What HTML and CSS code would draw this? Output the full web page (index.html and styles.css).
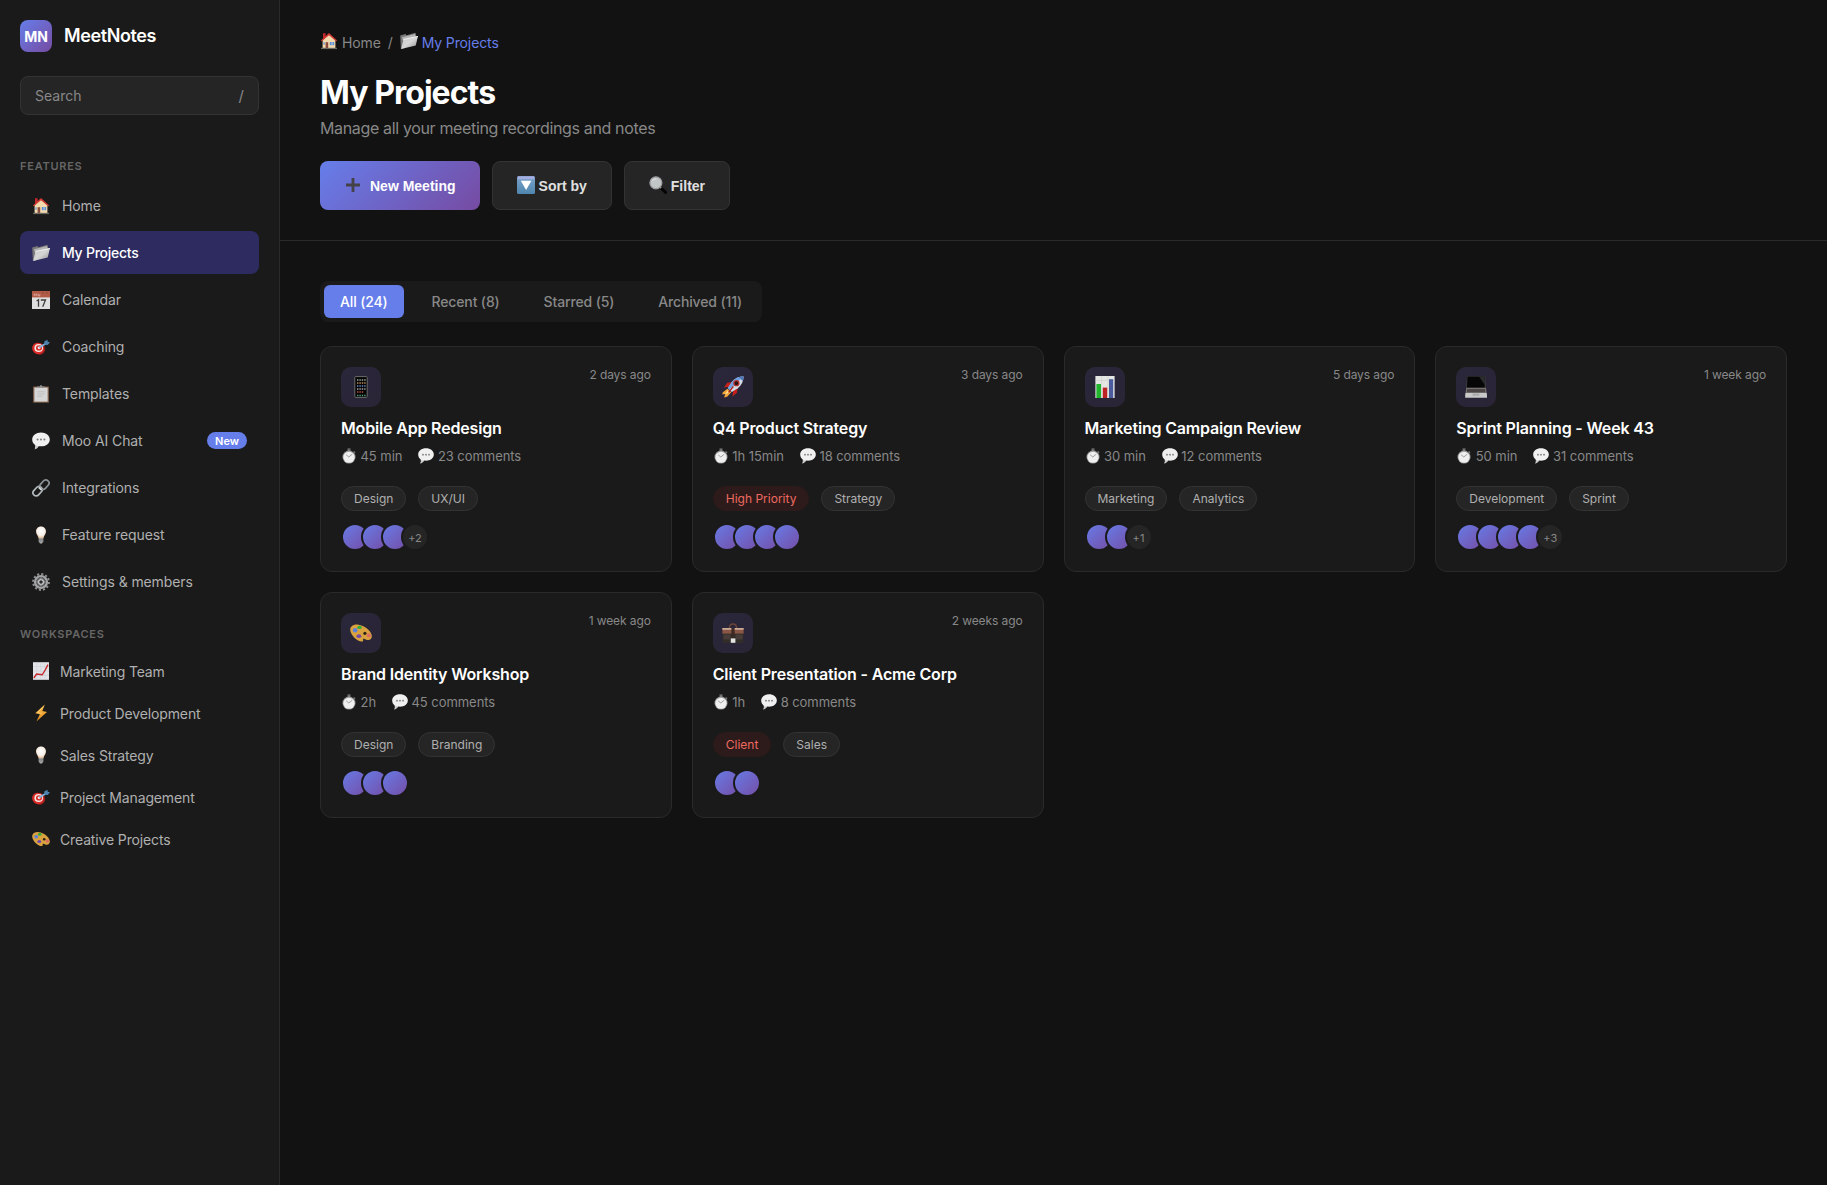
FILE: index.html
```html
<!DOCTYPE html>
<html lang="en">
<head>
  <meta charset="UTF-8" />
  <title>MeetNotes - My Projects</title>
  <link rel="stylesheet" href="styles.css">
</head>
<body>

  <!-- Icon set -->
  <svg class="sprite" xmlns="http://www.w3.org/2000/svg">
    <defs>
      <linearGradient id="silver" x1="0" y1="0" x2="1" y2="1">
        <stop offset="0" stop-color="#c9c9c9" />
        <stop offset="0.5" stop-color="#d6d6d6" />
        <stop offset="1" stop-color="#8f8f8f" />
      </linearGradient>
      <linearGradient id="gold" x1="0" y1="0" x2="0" y2="1">
        <stop offset="0" stop-color="#ffc04a" />
        <stop offset="1" stop-color="#e08a1e" />
      </linearGradient>
      <linearGradient id="blueBox" x1="0" y1="0" x2="0" y2="1">
        <stop offset="0" stop-color="#93a4d6" />
        <stop offset="0.25" stop-color="#6f9cc4" />
        <stop offset="1" stop-color="#4f86ad" />
      </linearGradient>
      <radialGradient id="bulbGlow" cx="0.5" cy="0.4" r="0.6">
        <stop offset="0" stop-color="#ffffff" />
        <stop offset="0.65" stop-color="#f6efe8" />
        <stop offset="1" stop-color="#e6b98f" />
      </radialGradient>
    </defs>

    <symbol id="i-home" viewBox="0 0 18 18">
      <path d="M3 1.2h2.6v4L3 7z" fill="#c3272b" />
      <path d="M2.6 8 9 2.4 15.4 8v8.2H2.6z" fill="#f3d9ae" />
      <path d="M.9 8.6 9 1l8.1 7.6-1 .7L9 3.2 1.9 9.3z" fill="#d43a35" />
      <path d="M5.6 10.2h2.6v6H5.6z" fill="#8a4b3a" />
      <path d="M9.8 10h4.4v3.2H9.8z" fill="#5b8fd6" />
      <path d="M11.7 10h.7v3.2h-.7z" fill="#f3e6cc" />
      <path d="M3.4 10.2h1.4v2.6H3.4z" fill="#6f9bd8" />
      <path d="M1 15.8h16v1.3H1z" fill="#6c6a63" />
    </symbol>

    <symbol id="i-folder" viewBox="0 0 18 18">
      <path d="M.2 3.4 5.4 2l1.200 1.200 8.800-2.400.8 2.600L3.600 16.400.9 17z" fill="#777" />
      <path d="M2 5.200 15 2l.6 3L3 9z" fill="#b5b5b5" />
      <path d="M3.600 7 18 4l-2.300 9.600L1.200 17z" fill="url(#silver)" />
      <path d="M3.600 7 18 4l-.2.900L3.400 7.900z" fill="#eee" />
    </symbol>

    <symbol id="i-calendar" viewBox="0 0 18 18">
      <rect width="18" height="18" fill="#dedede" />
      <rect width="18" height="6.400" fill="#b25a48" />
      <path d="M2.200 5V2.600L3.500 4.400 4.800 2.600V5M6.400 3v2h1.400V3" fill="none" stroke="#dcb5a8" stroke-width=".7" />
      <circle cx="11" cy="1.800" r=".6" fill="#5d3a33" />
      <circle cx="15" cy="1.800" r=".6" fill="#5d3a33" />
      <path d="M4.600 10 6.500 8.700v7M8.800 9h4.700l-2.800 6.700" fill="none" stroke="#3d3d3d" stroke-width="1.300" />
    </symbol>

    <symbol id="i-target" viewBox="0 0 18 18">
      <ellipse cx="7.200" cy="10.800" rx="6.100" ry="5.800" fill="#8f1e1c" transform="rotate(20 7.200 10.800)" />
      <ellipse cx="6.100" cy="10.400" rx="6" ry="5.500" fill="#dc2b28" transform="rotate(25 6.100 10.400)" />
      <ellipse cx="6.700" cy="10" rx="4.300" ry="3.900" fill="#f5e9e4" />
      <ellipse cx="7" cy="9.900" rx="3" ry="2.700" fill="#d92a27" />
      <ellipse cx="7.100" cy="9.800" rx="1.500" ry="1.400" fill="#f5e9e4" />
      <path d="m7.200 9.600 6.800-4" stroke="#7fb2dc" stroke-width="1.700" />
      <path d="m12.400 6.600-.2-3L15.400 1.800l.3 1.900 2.300.5-2.300 2.900z" fill="#4d82b0" />
    </symbol>

    <symbol id="i-clipboard" viewBox="0 0 18 18">
      <rect x="1.200" y="1.600" width="15.600" height="16" fill="#8e6a54" />
      <rect x="2.400" y="2.600" width="13.200" height="14" fill="#d6d6d6" />
      <path d="M5 2.800h8V1.400h-2.600L9.800.2H8.200l-.6 1.200H5z" fill="#909090" />
      <path d="M5.400 6.800h7.400M5.400 9h7.400M5.400 11.200h5.400" stroke="#b9b9b9" stroke-width=".8" />
    </symbol>

    <symbol id="i-chat" viewBox="0 0 18 18">
      <path d="M9 .4c5 0 8.800 3 8.800 7s-3.800 6.900-8.800 6.900c-.8 0-1.500-.1-2.200-.2-.9 1.500-2.300 2.700-4.100 3.200.6-1.200.8-2.600.5-4.200C1.400 11.800.2 9.800.2 7.400.2 3.400 4 .4 9 .4z" fill="#f0f0f0" />
      <path d="M3.200 13.100c1.600 1.100 3.700 1.300 5.800 1.200-.8 0-1.500-.1-2.200-.2-.9 1.500-2.300 2.700-4.100 3.200.6-1.200.8-2.600.5-4.200z" fill="#c9c9c9" />
      <circle cx="5.600" cy="7.500" r="1" fill="#7b7b7b" />
      <circle cx="9" cy="7.500" r="1" fill="#7b7b7b" />
      <circle cx="12.400" cy="7.500" r="1" fill="#7b7b7b" />
    </symbol>

    <symbol id="i-link" viewBox="0 0 18 18">
      <g fill="none" stroke-width="1.700">
        <rect x="-5.300" y="-3.200" width="10.600" height="6.400" rx="3.200" transform="translate(5.600 12.200) rotate(-48)" stroke="#b2b8bb" />
        <rect x="-5.300" y="-3.200" width="10.600" height="6.400" rx="3.200" transform="translate(12.400 5.700) rotate(-48)" stroke="#8b9194" />
        <path d="m6.800 8.300 2.600 2.500" stroke="#d5dadc" />
      </g>
    </symbol>

    <symbol id="i-bulb" viewBox="0 0 18 18">
      <path d="M9 .6c3 0 5 2.200 5 5 0 2.600-2 3.800-2.500 6.600h-5C6 9.400 4 8.200 4 5.600c0-2.800 2-5 5-5z" fill="url(#bulbGlow)" />
      <path d="M6.700 12h4.600v3.600L10 17.400H8l-1.300-1.800z" fill="#a9a9a9" />
      <path d="M6.700 13.300h4.600M6.700 15h4.600" stroke="#6b6b6b" stroke-width=".7" />
    </symbol>

    <symbol id="i-gear" viewBox="0 0 18 18">
      <circle cx="9" cy="9" r="7.900" fill="none" stroke="#8f9193" stroke-width="2" stroke-dasharray="2.100 2.036" />
      <circle cx="9" cy="9" r="5.900" fill="none" stroke="#a2a4a6" stroke-width="2.400" />
      <circle cx="9" cy="9" r="4.700" fill="#5f6163" />
      <circle cx="9" cy="9" r="2.400" fill="#2a2a2a" stroke="#c8cacc" stroke-width="1.300" />
      <path d="M9 4.400v2M9 11.600v2M4.400 9h2M11.600 9h2" stroke="#a2a4a6" />
    </symbol>

    <symbol id="i-trend" viewBox="0 0 18 18">
      <rect x="1" y=".2" width="16" height="17.600" fill="#e2e4e8" />
      <path d="M4.800.2v17.600M8.800.2v17.600M12.800.2v17.600M1 4.600h16M1 9h16M1 13.400h16" stroke="#cdd0d6" stroke-width=".6" />
      <path d="M1.800 16 4.600 12l5.600.8 3-4.800L16 2.600" fill="none" stroke="#c5282c" stroke-width="1.400" />
    </symbol>

    <symbol id="i-bolt" viewBox="0 0 18 18">
      <path d="M12.800.6 3.200 9.200l4.700 1L4.400 17.400 15 7.900l-4.700-1z" fill="url(#gold)" />
      <path d="M11.200 3 5.400 8.600l4.300.8" fill="none" stroke="#ffe08f" stroke-width=".7" />
    </symbol>

    <symbol id="i-palette" viewBox="0 0 18 18">
      <path d="M.2 6C.4 3.400 3.400 1.700 7 2.200c4.600.6 9.600 4.200 10.700 8.200.7 2.700-1 4.800-3.600 4.300-1.500-.3-2.300-1.300-3.200-.9-.8.400.6 1.900-.8 2.200C6.700 16.600-.2 10.600.2 6z" fill="#d9a23f" />
      <ellipse cx="4.200" cy="6.800" rx="1.900" ry="1.800" fill="#5b82d8" />
      <ellipse cx="7.800" cy="4.400" rx="1.900" ry="1.300" fill="#2fae3a" />
      <ellipse cx="7.300" cy="11.600" rx="2" ry="1.500" fill="#7448a8" />
      <ellipse cx="15.400" cy="11" rx="1.700" ry="1.700" fill="#dd6d63" />
      <circle cx="12.200" cy="9.300" r="1.300" fill="#2a2118" />
    </symbol>

    <symbol id="i-stopwatch" viewBox="0 0 18 18">
      <path d="M7.300.4h3.400v3.400H7.300z" fill="#6d6d6d" />
      <path d="m14 3.200 2.400 1.600-1.700 1.800z" fill="#7b7b7b" />
      <circle cx="9" cy="10.200" r="7.300" fill="#9b9b9b" />
      <circle cx="9" cy="10.400" r="6.300" fill="#efefef" />
      <path d="m5.800 7.700 3 2.400 3.900-3.200" fill="none" stroke="#8d8d8d" stroke-width=".9" />
    </symbol>

    <symbol id="i-plus" viewBox="0 0 18 18">
      <path d="M7.600 2h2.800v5.600H16v2.800h-5.600V16H7.600v-5.600H2V7.600h5.600z" fill="#444246" />
    </symbol>

    <symbol id="i-down" viewBox="0 0 18 18">
      <rect width="18" height="18" rx="1.500" fill="url(#blueBox)" />
      <path d="M1 .8h16v2.400H1z" fill="#a4addf" />
      <path d="M3.800 4.800h10.600L9.100 14z" fill="#fff" />
    </symbol>

    <symbol id="i-magnifier" viewBox="0 0 18 18">
      <path d="m11 11 5.600 5.400" stroke="#050505" stroke-width="3" stroke-linecap="round" />
      <path d="m10.600 10.400 1.600 1.500" stroke="#8c8c8c" stroke-width="2" />
      <circle cx="6.900" cy="6.800" r="6" fill="#c2c6c6" stroke="#9c9c9c" stroke-width="1.200" />
      <path d="M3.300 5.200c.8-1.600 2.200-2.300 3.800-2.300" fill="none" stroke="#e2e4e4" />
    </symbol>

    <symbol id="i-phone" viewBox="0 0 22 22">
      <rect x="4.800" y=".6" width="12.400" height="20.800" rx=".8" fill="#050505" stroke="#6c6c6c" stroke-width="1" />
      <g stroke-width="1.400" stroke-dasharray="1.400 1">
        <path d="M7 4h9" stroke="#9aa89a" />
        <path d="M7 7h9" stroke="#c08f58" />
        <path d="M7 10h9" stroke="#6a86c8" />
        <path d="M7 13h9" stroke="#a9a6a6" />
        <path d="M7 16h7" stroke="#b8524a" />
        <path d="M7 19.500h9" stroke="#4d9d78" />
      </g>
    </symbol>

    <symbol id="i-rocket" viewBox="0 0 22 22">
      <path d="M10 6.200 5.200 6.800 2 11.400l5-.6zM15.600 12l-.6 4.800-4.600 3.600.8-5.400z" fill="#c6201d" />
      <path d="M5.400 12.800.6 16.400l-.2 2.200 3-.6-1.400 3.600 3.200-.8 4-4.600z" fill="#f0a73a" />
      <path d="m5.600 14.400-2.800 4.400 4.200-2.600z" fill="#ffe59a" />
      <path d="M21.600.4c-4.600 0-8.800 1.800-11.600 5.400L5.800 12l4 4 6-3.800C19.600 9.200 21.600 5 21.600.4z" fill="#d3dae6" />
      <path d="M21.600.4c-4.600 0-8.800 1.800-11.600 5.400L5.800 12l1.600 1.600z" fill="#6f9fe0" />
      <path d="M21.600.4c-1.700 0-3.300.2-4.800.8l4 3.800c.6-1.500.8-3 .8-4.600z" fill="#4d78bd" />
      <circle cx="14.400" cy="7.200" r="2.500" fill="#2a1416" stroke="#b8332f" stroke-width="1.300" />
      <path d="m11.400 10.400-4.800 6" stroke="#b3211e" stroke-width="1.500" />
    </symbol>

    <symbol id="i-bars" viewBox="0 0 22 22">
      <rect x="1.400" width="19.200" height="22" fill="#e4e6e4" />
      <path d="M1.400 4.400h19.200M7.600 0v22M14 0v22" stroke="#cbd0cb" stroke-width=".6" />
      <rect x="2.400" y="8" width="4.600" height="14" fill="#21b52d" />
      <rect x="8.800" y="11.600" width="4.400" height="10.400" fill="#bd2222" />
      <rect x="15" y="3.200" width="4.200" height="18.800" fill="#4b5c9e" />
    </symbol>

    <symbol id="i-laptop" viewBox="0 0 22 22">
      <path d="M2 .2h18.200l.4 11.800H1.400z" fill="#4a4a4a" />
      <path d="M2.400.6h17.200l.2 10.800H2z" fill="#060606" />
      <path d="m14 .6h5.600l.2 8.400z" fill="#2b2d2d" />
      <path d="M1.200 12H21l1 7.400H.2z" fill="#77726f" />
      <path d="M2.200 13h17.800l.4 3.200H1.800z" fill="#4b4645" />
      <path d="M.2 19.400.6 17h21l.4 2.400v2.400H.2z" fill="#c9c9c9" />
      <path d="M7.600 17.600h6.800v2.200H7.400z" fill="#aaa" />
    </symbol>

    <symbol id="i-briefcase" viewBox="0 0 22 22">
      <path d="M7.400 6c0-3 1.200-4 3.600-4s3.600 1 3.600 4" fill="none" stroke="#6d4438" stroke-width="1.300" />
      <path d="M.4 6h21.200v6H.4z" fill="#8a5645" />
      <path d="M.4 6h21.200v1.800H.4z" fill="#c9a896" />
      <path d="M.6 11.600h20.800V21H.6z" fill="#332d2a" />
      <path d="M1.400 12.400h7v5h-7zM13.600 12.400h7v5h-7z" fill="#473c37" />
      <path d="M9.400 6h3.200v9H9.400z" fill="#3d2823" />
      <rect x="8.800" y="16.400" width="4.600" height="4.400" fill="#e4e4e0" />
    </symbol>
  </svg>

  <div class="app">
    <aside class="sidebar">
      <div class="logo">
        <div class="logo-icon">MN</div>
        <span class="logo-text">MeetNotes</span>
      </div>

      <div class="search">
        <span>Search</span>
        <span class="search-key">/</span>
      </div>

      <h3 class="section-title">Features</h3>
      <nav class="nav">
        <a class="nav-item"><svg><use href="#i-home" /></svg>Home</a>
        <a class="nav-item active"><svg><use href="#i-folder" /></svg>My Projects</a>
        <a class="nav-item"><svg><use href="#i-calendar" /></svg>Calendar</a>
        <a class="nav-item"><svg><use href="#i-target" /></svg>Coaching</a>
        <a class="nav-item"><svg><use href="#i-clipboard" /></svg>Templates</a>
        <a class="nav-item"><svg><use href="#i-chat" /></svg>Moo AI Chat<span class="badge">New</span></a>
        <a class="nav-item"><svg><use href="#i-link" /></svg>Integrations</a>
        <a class="nav-item"><svg><use href="#i-bulb" /></svg>Feature request</a>
        <a class="nav-item"><svg><use href="#i-gear" /></svg>Settings &amp; members</a>
      </nav>

      <h3 class="section-title">Workspaces</h3>
      <nav class="workspaces">
        <a class="workspace-item"><svg><use href="#i-trend" /></svg>Marketing Team</a>
        <a class="workspace-item"><svg><use href="#i-bolt" /></svg>Product Development</a>
        <a class="workspace-item"><svg><use href="#i-bulb" /></svg>Sales Strategy</a>
        <a class="workspace-item"><svg><use href="#i-target" /></svg>Project Management</a>
        <a class="workspace-item"><svg><use href="#i-palette" /></svg>Creative Projects</a>
      </nav>
    </aside>

    <main class="main">
      <header class="header">
        <div class="breadcrumb">
          <span class="crumb"><svg><use href="#i-home" /></svg>Home</span>
          <span>/</span>
          <span class="crumb current"><svg><use href="#i-folder" /></svg>My Projects</span>
        </div>
        <h1 class="page-title">My Projects</h1>
        <p class="page-subtitle">Manage all your meeting recordings and notes</p>
        <div class="actions">
          <button class="btn btn-primary"><svg><use href="#i-plus" /></svg>New Meeting</button>
          <button class="btn"><svg><use href="#i-down" /></svg>Sort by</button>
          <button class="btn"><svg><use href="#i-magnifier" /></svg>Filter</button>
        </div>
      </header>

      <section class="content">
        <div class="tabs">
          <button class="tab active">All (24)</button>
          <button class="tab">Recent (8)</button>
          <button class="tab">Starred (5)</button>
          <button class="tab">Archived (11)</button>
        </div>

        <div class="projects">
          <article class="card">
            <div class="card-top">
              <div class="card-icon"><svg><use href="#i-phone" /></svg></div>
              <span class="card-date">2 days ago</span>
            </div>
            <h2 class="card-title">Mobile App Redesign</h2>
            <div class="card-meta">
              <span><svg><use href="#i-stopwatch" /></svg>45 min</span>
              <span><svg><use href="#i-chat" /></svg>23 comments</span>
            </div>
            <div class="tags"><span class="tag">Design</span><span class="tag">UX/UI</span></div>
            <div class="avatars"><i></i><i></i><i></i><b>+2</b></div>
          </article>

          <article class="card">
            <div class="card-top">
              <div class="card-icon"><svg><use href="#i-rocket" /></svg></div>
              <span class="card-date">3 days ago</span>
            </div>
            <h2 class="card-title">Q4 Product Strategy</h2>
            <div class="card-meta">
              <span><svg><use href="#i-stopwatch" /></svg>1h 15min</span>
              <span><svg><use href="#i-chat" /></svg>18 comments</span>
            </div>
            <div class="tags"><span class="tag priority">High Priority</span><span class="tag">Strategy</span></div>
            <div class="avatars"><i></i><i></i><i></i><i></i></div>
          </article>

          <article class="card">
            <div class="card-top">
              <div class="card-icon"><svg><use href="#i-bars" /></svg></div>
              <span class="card-date">5 days ago</span>
            </div>
            <h2 class="card-title">Marketing Campaign Review</h2>
            <div class="card-meta">
              <span><svg><use href="#i-stopwatch" /></svg>30 min</span>
              <span><svg><use href="#i-chat" /></svg>12 comments</span>
            </div>
            <div class="tags"><span class="tag">Marketing</span><span class="tag">Analytics</span></div>
            <div class="avatars"><i></i><i></i><b>+1</b></div>
          </article>

          <article class="card">
            <div class="card-top">
              <div class="card-icon"><svg><use href="#i-laptop" /></svg></div>
              <span class="card-date">1 week ago</span>
            </div>
            <h2 class="card-title">Sprint Planning - Week 43</h2>
            <div class="card-meta">
              <span><svg><use href="#i-stopwatch" /></svg>50 min</span>
              <span><svg><use href="#i-chat" /></svg>31 comments</span>
            </div>
            <div class="tags"><span class="tag">Development</span><span class="tag">Sprint</span></div>
            <div class="avatars"><i></i><i></i><i></i><i></i><b>+3</b></div>
          </article>

          <article class="card">
            <div class="card-top">
              <div class="card-icon"><svg><use href="#i-palette" /></svg></div>
              <span class="card-date">1 week ago</span>
            </div>
            <h2 class="card-title">Brand Identity Workshop</h2>
            <div class="card-meta">
              <span><svg><use href="#i-stopwatch" /></svg>2h</span>
              <span><svg><use href="#i-chat" /></svg>45 comments</span>
            </div>
            <div class="tags"><span class="tag">Design</span><span class="tag">Branding</span></div>
            <div class="avatars"><i></i><i></i><i></i></div>
          </article>

          <article class="card">
            <div class="card-top">
              <div class="card-icon"><svg><use href="#i-briefcase" /></svg></div>
              <span class="card-date">2 weeks ago</span>
            </div>
            <h2 class="card-title">Client Presentation - Acme Corp</h2>
            <div class="card-meta">
              <span><svg><use href="#i-stopwatch" /></svg>1h</span>
              <span><svg><use href="#i-chat" /></svg>8 comments</span>
            </div>
            <div class="tags"><span class="tag priority">Client</span><span class="tag">Sales</span></div>
            <div class="avatars"><i></i><i></i></div>
          </article>
        </div>
      </section>
    </main>
  </div>

</body>
</html>
```
FILE: styles.css
```css
* {
  margin: 0;
  padding: 0;
  box-sizing: border-box;
}

body {
  font-family: Inter, 'Liberation Sans', sans-serif;
  background: #121212;
  color: #FFFFFF;
  font-size: 14px;
}

svg {
  display: block;
  flex-shrink: 0;
  width: 18px;
  height: 18px;
}

.sprite {
  position: absolute;
  width: 0;
  height: 0;
}

.app {
  display: flex;
  height: 100vh;
}

/* Sidebar */
.sidebar {
  width: 280px;
  flex-shrink: 0;
  padding: 20px;
  background: #1A1A1A;
  border-right: 1px solid #2A2A2A;
}

.logo {
  display: flex;
  align-items: center;
  gap: 12px;
  height: 32px;
  margin-bottom: 24px;
}

.logo-icon {
  display: flex;
  align-items: center;
  justify-content: center;
  width: 32px;
  height: 32px;
  padding-top: 1px;
  border-radius: 8px;
  background: linear-gradient(135deg, #667EEA 0%, #764BA2 100%);
  font-size: 14px;
  font-weight: 700;
}

.logo-text {
  font-size: 18px;
  font-weight: 600;
  line-height: 34px;
  letter-spacing: -0.4px;
}

.search {
  display: flex;
  align-items: center;
  justify-content: space-between;
  height: 39px;
  padding: 0 14px;
  margin-bottom: 45px;
  background: #252525;
  border: 1px solid #333333;
  border-radius: 8px;
  color: #888888;
}

.search-key {
  font-size: 15px;
}

.section-title {
  font-size: 11px;
  font-weight: 600;
  line-height: 13px;
  letter-spacing: 0.75px;
  text-transform: uppercase;
  color: #666666;
}

.nav {
  display: flex;
  flex-direction: column;
  gap: 4px;
  margin: 11px 0 25px;
}

.nav-item {
  display: flex;
  align-items: center;
  gap: 12px;
  height: 43px;
  padding: 0 12px;
  border-radius: 8px;
  letter-spacing: -0.1px;
  color: #B0B0B0;
}

.nav-item.active {
  background: #2D2B5F;
  color: #FFFFFF;
  font-weight: 500;
  letter-spacing: -0.25px;
}

.badge {
  margin-left: auto;
  height: 17px;
  padding: 0 8px;
  border-radius: 10px;
  background: #667EEA;
  color: #FFFFFF;
  font-size: 11px;
  font-weight: 600;
  line-height: 18px;
  letter-spacing: 0;
}

.workspaces {
  margin-top: 9px;
}

.workspace-item {
  display: flex;
  align-items: center;
  gap: 10px;
  height: 42px;
  padding: 0 12px;
  letter-spacing: -0.14px;
  color: #B0B0B0;
}

/* Header */
.main {
  flex: 1;
}

.header {
  height: 241px;
  padding: 31px 40px 0;
  border-bottom: 1px solid #2A2A2A;
}

.breadcrumb {
  display: flex;
  align-items: center;
  gap: 7px;
  height: 22px;
  letter-spacing: -0.12px;
  color: #888888;
}

.crumb {
  display: flex;
  align-items: center;
  gap: 4px;
}

.crumb svg {
  margin-bottom: 2px;
}

.crumb.current {
  color: #667EEA;
}

.page-title {
  margin-top: 20px;
  font-size: 32px;
  font-weight: 700;
  line-height: 39px;
  letter-spacing: -0.95px;
}

.page-subtitle {
  margin-top: 6px;
  font-size: 16px;
  line-height: 20px;
  letter-spacing: -0.35px;
  color: #888888;
}

.actions {
  display: flex;
  gap: 12px;
  margin-top: 23px;
}

.btn {
  display: flex;
  align-items: center;
  gap: 4px;
  height: 49px;
  padding: 1px 24px 0;
  border: 1px solid #333333;
  border-radius: 8px;
  background: #252525;
  color: #E0E0E0;
  font-family: 'Liberation Sans', Arial, sans-serif;
  font-size: 14px;
  font-weight: 700;
}

.btn svg {
  margin-bottom: 2px;
}

.btn-primary {
  gap: 8px;
  padding-top: 0;
  border: none;
  background: linear-gradient(135deg, #667EEA 0%, #764BA2 100%);
  color: #FFFFFF;
}

/* Tabs */
.content {
  padding: 40px;
}

.tabs {
  display: flex;
  gap: 12px;
  width: fit-content;
  padding: 4px;
  margin-bottom: 24px;
  border-radius: 8px;
  background: #1A1A1A;
}

.tab {
  height: 33px;
  padding: 0 16px;
  border: none;
  border-radius: 6px;
  background: transparent;
  color: #888888;
  font-family: inherit;
  font-size: 14px;
  font-weight: 500;
  letter-spacing: -0.14px;
}

.tab.active {
  background: #667EEA;
  color: #FFFFFF;
}

/* Project cards */
.projects {
  display: grid;
  grid-template-columns: repeat(4, 1fr);
  gap: 20px;
}

.card {
  height: 226px;
  padding: 20px;
  background: #1A1A1A;
  border: 1px solid #2A2A2A;
  border-radius: 12px;
}

.card-top {
  display: flex;
  justify-content: space-between;
}

.card-icon {
  display: flex;
  align-items: center;
  justify-content: center;
  width: 40px;
  height: 40px;
  border-radius: 10px;
  background: linear-gradient(135deg, #29273A, #2A2436);
}

.card-icon svg {
  width: 22px;
  height: 22px;
}

.card-date {
  font-size: 12px;
  line-height: 16px;
  letter-spacing: -0.1px;
  color: #888888;
}

.card-title {
  margin-top: 11px;
  font-size: 16px;
  font-weight: 600;
  line-height: 20px;
  letter-spacing: -0.17px;
}

.card-meta {
  display: flex;
  gap: 16px;
  height: 18px;
  margin-top: 9px;
  font-size: 13px;
  letter-spacing: -0.05px;
  color: #888888;
}

.card-meta span {
  display: flex;
  align-items: center;
  gap: 3.5px;
}

.card-meta svg {
  width: 16px;
  height: 16px;
}

.tags {
  display: flex;
  gap: 12px;
  margin-top: 21px;
}

.tag {
  height: 25px;
  padding: 0 12px;
  border: 1px solid #333333;
  border-radius: 13px;
  background: #252525;
  color: #B0B0B0;
  font-size: 12px;
  line-height: 23px;
}

.tag.priority {
  border-color: #2D1A1A;
  background: #2D1A1A;
  color: #EC6A60;
}

.avatars {
  display: flex;
  margin-top: 12px;
}

.avatars i,
.avatars b {
  width: 28px;
  height: 28px;
  margin-right: -8px;
  border: 2px solid #1A1A1A;
  border-radius: 50%;
  background: linear-gradient(135deg, #667EEA 0%, #764BA2 100%) border-box;
}

.avatars b {
  background: #252525;
  color: #888888;
  font-size: 11px;
  font-weight: 400;
  line-height: 26px;
  text-align: center;
}
```
